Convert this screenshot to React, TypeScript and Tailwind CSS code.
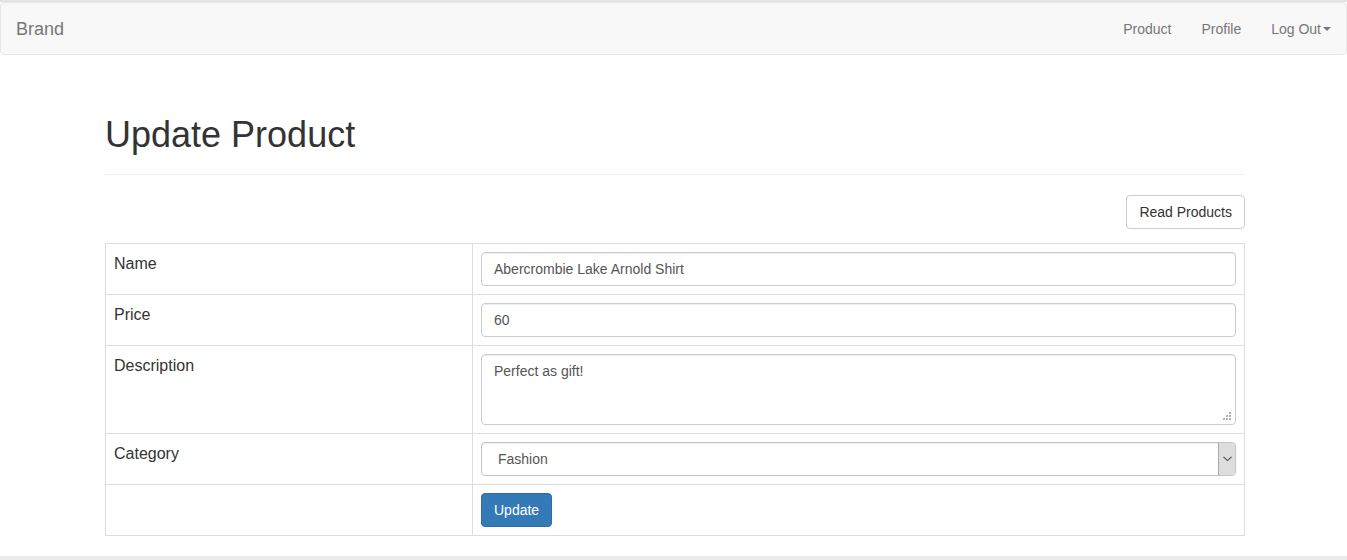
import React from "react";

export default function App() {
  const font = { fontFamily: '"Liberation Sans", Arial, Helvetica, sans-serif' };
  return (
    <div style={font} className="w-[1347px] bg-white text-[#333] text-[14px]">
      <div className="h-[2px] bg-[#e3e3e3]" />
      <nav className="h-[53px] bg-[#f8f8f8] border border-[#e7e7e7] rounded-[4px] flex items-center justify-between pt-[1px]">
        <div className="pl-[15px] text-[18px] leading-[20px] text-[#777]">Brand</div>
        <ul className="flex items-center text-[14px] leading-[20px] text-[#777]">
          <li className="px-[15px] py-[15px]">Product</li>
          <li className="px-[15px] py-[15px]">Profile</li>
          <li className="px-[15px] py-[15px] flex items-center">
            Log Out
            <span className="ml-[2px] inline-block w-0 h-0 border-t-[4px] border-t-[#777] border-l-[4px] border-l-transparent border-r-[4px] border-r-transparent" />
          </li>
        </ul>
      </nav>
      <div className="w-[1170px] ml-[90px] px-[15px]">
        <div className="pt-[60px] pb-[9px] border-b border-[#eee]">
          <h1 className="text-[36px] leading-[40px] font-medium mb-[10px] text-[#333]">Update Product</h1>
        </div>
        <div className="flex justify-end mt-[20px] mb-[14px]">
          <button className="h-[34px] px-[12px] border border-[#ccc] rounded-[4px] bg-white text-[14px] text-[#333] leading-[20px]">
            Read Products
          </button>
        </div>
        <table className="w-full border-collapse border border-[#ddd]">
          <tbody>
            <tr>
              <td className="w-[367px] border border-[#ddd] p-[8px] align-top text-[16px] leading-[23px] text-[#333]">Name</td>
              <td className="border border-[#ddd] p-[8px] align-top">
                <div className="h-[34px] border border-[#ccc] rounded-[4px] px-[12px] flex items-center text-[14px] text-[#555] shadow-[inset_0_1px_1px_rgba(0,0,0,0.075)]">
                  Abercrombie Lake Arnold Shirt
                </div>
              </td>
            </tr>
            <tr>
              <td className="border border-[#ddd] p-[8px] align-top text-[16px] leading-[23px] text-[#333]">Price</td>
              <td className="border border-[#ddd] p-[8px] align-top">
                <div className="h-[34px] border border-[#ccc] rounded-[4px] px-[12px] flex items-center text-[14px] text-[#555] shadow-[inset_0_1px_1px_rgba(0,0,0,0.075)]">
                  60
                </div>
              </td>
            </tr>
            <tr>
              <td className="border border-[#ddd] p-[8px] align-top text-[16px] leading-[23px] text-[#333]">Description</td>
              <td className="border border-[#ddd] p-[8px] align-top">
                <div className="relative h-[71px] border border-[#ccc] rounded-[4px] px-[12px] py-[6px] text-[14px] leading-[20px] text-[#555] shadow-[inset_0_1px_1px_rgba(0,0,0,0.075)]">
                  Perfect as gift!
                  <svg className="absolute right-[3px] bottom-[3px]" width="9" height="9" viewBox="0 0 9 9">
                    <rect x="6" y="0" width="2" height="2" fill="#b3b3b3" />
                    <rect x="3" y="3" width="2" height="2" fill="#b3b3b3" />
                    <rect x="6" y="3" width="2" height="2" fill="#b3b3b3" />
                    <rect x="0" y="6" width="2" height="2" fill="#b3b3b3" />
                    <rect x="3" y="6" width="2" height="2" fill="#b3b3b3" />
                    <rect x="6" y="6" width="2" height="2" fill="#b3b3b3" />
                  </svg>
                </div>
              </td>
            </tr>
            <tr>
              <td className="border border-[#ddd] p-[8px] align-top text-[16px] leading-[23px] text-[#333]">Category</td>
              <td className="border border-[#ddd] p-[8px] align-top">
                <div className="h-[34px] border border-[#c4c4c4] rounded-[4px] flex items-stretch text-[14px] text-[#555] shadow-[inset_0_1px_1px_rgba(0,0,0,0.075)]">
                  <div className="flex-1 flex items-center pl-[16px]">Fashion</div>
                  <div className="w-[17px] bg-[#dddddd] border-l border-[#a9a9a9] rounded-r-[3px] flex items-center justify-center">
                    <svg width="9" height="6" viewBox="0 0 9 6">
                      <path d="M0.5 0.8 L4.5 4.6 L8.5 0.8" fill="none" stroke="#4a4a4a" strokeWidth="1.1" />
                    </svg>
                  </div>
                </div>
              </td>
            </tr>
            <tr>
              <td className="border border-[#ddd] p-[8px] align-top" />
              <td className="border border-[#ddd] p-[8px] align-top">
                <button className="h-[34px] px-[12px] bg-[#337ab7] border border-[#2e6da4] rounded-[4px] text-white text-[14px] leading-[20px]">
                  Update
                </button>
              </td>
            </tr>
          </tbody>
        </table>
      </div>
      <div className="mt-[20px] h-[4px] bg-[#ebebeb]" />
    </div>
  );
}
